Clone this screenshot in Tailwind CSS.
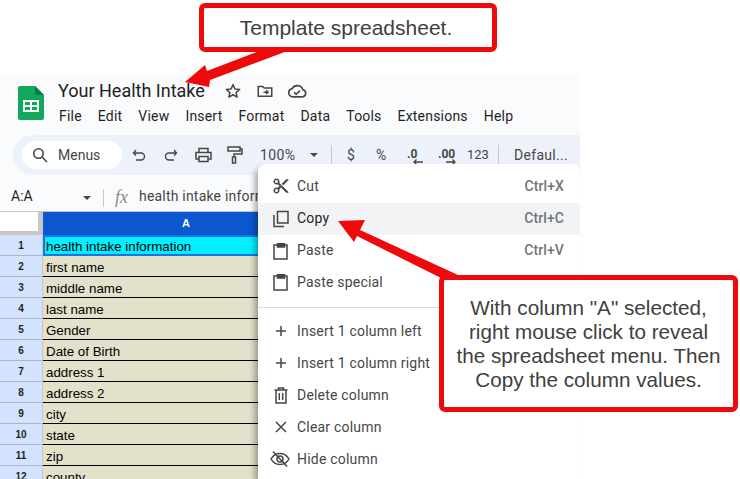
<!doctype html>
<html><head><meta charset="utf-8"><script src="https://cdn.jsdelivr.net/npm/@tailwindcss/browser@4"></script></head>
<body class="bg-white">
<div class="relative w-[740px] h-[479px] overflow-hidden bg-white font-['Roboto',sans-serif]">
  <!-- App -->
  <div class="absolute left-0 top-[74px] w-[580px] h-[405px] flex flex-col bg-[#f9fbfd] overflow-hidden">
    <div class="flex h-[61px] shrink-0">
      <div class="w-[58px] shrink-0 pl-[18px] pt-[12px]">
        <svg width="26" height="34" viewBox="0 0 26 34"><path d="M2 0H17L26 9V32a2 2 0 0 1-2 2H2a2 2 0 0 1-2-2V2a2 2 0 0 1 2-2z" fill="#11a75c"/><path d="M17 0L26 9H19a2 2 0 0 1-2-2z" fill="#0b7a42"/><path d="M5 14H21V26H5zM7 16V19H12V16zM14 16V19H19V16zM7 21V24H12V21zM14 21V24H19V21z" fill="#fff" fill-rule="evenodd"/></svg>
      </div>
      <div class="flex flex-col">
        <div class="flex items-center h-[34px]">
          <span class="text-[18px] leading-[34px] text-[#1f1f1f]">Your Health Intake</span>
          <svg class="ml-[19px]" width="18" height="18" viewBox="0 0 24 24" fill="none" stroke="#444746" stroke-width="2" stroke-linejoin="round"><path d="M12 3.500l2.600 5.800 6.300.6-4.800 4.200 1.400 6.200L12 17l-5.500 3.300 1.400-6.200L3.100 9.900l6.300-.6z"/></svg>
          <svg class="ml-[14px]" width="18" height="18" viewBox="0 0 24 24" fill="none" stroke="#444746" stroke-width="2"><path d="M3 6h6l2 2h10v11H3z"/><path d="M10 13.500h6M13.500 11l2.500 2.500-2.500 2.500"/></svg>
          <svg class="ml-[13px]" width="20" height="18" viewBox="0 0 24 20" fill="none" stroke="#444746" stroke-width="2"><path d="M7 17a5 5 0 0 1-.8-9.900A7 7 0 0 1 19 8.500 4.300 4.300 0 0 1 18.500 17z"/><path d="M8.500 11.500l2.500 2.500 4.500-4.500"/></svg>
        </div>
        <div class="flex h-[24px] items-center gap-[16px] text-[14px] text-[#1f1f1f] mt-[-4px] tracking-[.2px]">
          <span class="ml-px">File</span><span>Edit</span><span>View</span><span>Insert</span><span>Format</span><span>Data</span><span>Tools</span><span>Extensions</span><span>Help</span>
        </div>
      </div>
    </div>
    <!-- Toolbar -->
    <div class="ml-[13px] h-[40px] shrink-0 flex items-center rounded-l-[20px] bg-[#edf2fa] text-[14px] text-[#444746]">
      <div class="ml-[9px] w-[100px] h-[28px] rounded-full bg-white flex items-center pl-[10px] gap-[10px]">
        <svg width="16" height="16" viewBox="0 0 16 16" fill="none" stroke="#444746" stroke-width="1.600"><circle cx="6.500" cy="6.500" r="4.700"/><path d="M10 10l5 5"/></svg>
        <span>Menus</span>
      </div>
      <svg class="ml-[10px]" width="14" height="14" viewBox="0 0 14 14" fill="none" stroke="#444746" stroke-width="1.400"><path d="M4 2L1.500 5 4 7.500M1.500 5H9a3 3 0 0 1 0 7H4"/></svg>
      <svg class="ml-[18px]" width="14" height="14" viewBox="0 0 14 14" fill="none" stroke="#444746" stroke-width="1.400"><path d="M10 2l2.500 3L10 7.500M12.500 5H5a3 3 0 0 0 0 7h5"/></svg>
      <svg class="ml-[17px]" width="17" height="16" viewBox="0 0 17 16" fill="none" stroke="#444746" stroke-width="1.500"><path d="M4 5V1.500h9V5M4 12H1V5.500h15V12h-3M4 9.500h9v5H4z"/></svg>
      <svg class="ml-[15px]" width="16" height="18" viewBox="0 0 16 18" fill="none" stroke="#444746" stroke-width="1.500"><path d="M1 1h12v4H1zM13 3h2v5H7v3M5.500 11h3v6h-3z"/></svg>
      <span class="ml-[17px] w-[38px] tracking-[.4px]">100%</span>
      <span class="ml-[12px] w-0 h-0 border-x-[4px] border-t-[4px] border-x-transparent border-t-[#444746]"></span>
      <span class="ml-[13px] w-px h-[20px] bg-[#c7c7c7]"></span>
      <span class="ml-[15px] w-[9px]">$</span>
      <span class="ml-[20px] w-[12px]">%</span>
      <span class="ml-[19px] relative w-[16px] h-[20px] text-[12px] font-bold leading-[18px]">.0<svg class="absolute left-[6px] top-[14px]" width="10" height="6" viewBox="0 0 10 6" fill="none" stroke="#444746" stroke-width="1.300"><path d="M10 3H1M3.500.5L1 3l2.500 2.500"/></svg></span>
      <span class="ml-[15px] relative w-[20px] h-[20px] text-[12px] font-bold leading-[18px]">.00<svg class="absolute left-[8px] top-[14px]" width="10" height="6" viewBox="0 0 10 6" fill="none" stroke="#444746" stroke-width="1.300"><path d="M0 3h9M6.500.5L9 3 6.500 5.500"/></svg></span>
      <span class="ml-[9px] w-[22px] text-[13px]">123</span>
      <span class="ml-[9px] w-px h-[20px] bg-[#c7c7c7]"></span>
      <span class="ml-[15px] tracking-[.3px]">Defaul...</span>
    </div>
    <!-- Formula bar -->
    <div class="h-[37px] shrink-0 flex items-center text-[14px] text-[#1f1f1f] bg-[#f9fbfd] border-b border-[#c7c7c7]">
      <span class="ml-[11px] w-[70px] text-[14px] mt-[9px] h-[27px] leading-[24px]">A:A</span>
      <span class="ml-[2px] mt-[9px] w-0 h-0 border-x-[4px] border-t-[4px] border-x-transparent border-t-[#444746]"></span>
      <span class="ml-[12px] mt-[9px] w-px h-[18px] bg-[#c7c7c7]"></span>
      <span class="ml-[11px] mt-[9px] font-['Liberation_Serif',serif] italic text-[18px] text-[#8a8a8a] w-[24px]">fx</span>
      <span class="mt-[7px] whitespace-nowrap text-[#444746] tracking-[.2px]">health intake information</span>
    </div>
    <!-- Grid -->
    <div class="flex-1 min-h-0 flex flex-col font-['Liberation_Sans',sans-serif]">
      <div class="flex h-[23px] shrink-0">
        <div class="w-[43px] bg-[#c7c7c7] pr-[5px] pb-[4px]"><div class="h-full bg-white"></div></div>
        <div class="flex-1 bg-[#0b57d0]"><div class="w-[286px] text-white text-[11px] font-bold text-center leading-[23px]">A</div></div>
      </div>
      <div class="flex h-[21px] shrink-0"><div class="w-[43px] shrink-0 bg-[#d3e3fd] border-r border-[#c7c7c7] text-[10px] font-bold text-center leading-[21px] text-[#1f1f1f] border-b border-b-[#a8b8d0]">1</div><div class="flex-1 bg-[#00f0ff] border-2 border-[#1a73e8] text-[13.33px] leading-[19px] text-black pl-[1px] whitespace-nowrap">health intake information</div></div>
      <div class="flex h-[21px] shrink-0"><div class="w-[43px] shrink-0 bg-[#d3e3fd] border-r border-[#c7c7c7] text-[10px] font-bold text-center leading-[21px] text-[#1f1f1f] border-b border-b-[#a8b8d0]">2</div><div class="flex-1 bg-[#e4e1cb] border-b border-black text-[13.33px] leading-[24px] text-black pl-[3px]">first name</div></div>
      <div class="flex h-[21px] shrink-0"><div class="w-[43px] shrink-0 bg-[#d3e3fd] border-r border-[#c7c7c7] text-[10px] font-bold text-center leading-[21px] text-[#1f1f1f] border-b border-b-[#a8b8d0]">3</div><div class="flex-1 bg-[#e4e1cb] border-b border-black text-[13.33px] leading-[24px] text-black pl-[3px]">middle name</div></div>
      <div class="flex h-[21px] shrink-0"><div class="w-[43px] shrink-0 bg-[#d3e3fd] border-r border-[#c7c7c7] text-[10px] font-bold text-center leading-[21px] text-[#1f1f1f] border-b border-b-[#a8b8d0]">4</div><div class="flex-1 bg-[#e4e1cb] border-b border-black text-[13.33px] leading-[24px] text-black pl-[3px]">last name</div></div>
      <div class="flex h-[21px] shrink-0"><div class="w-[43px] shrink-0 bg-[#d3e3fd] border-r border-[#c7c7c7] text-[10px] font-bold text-center leading-[21px] text-[#1f1f1f] border-b border-b-[#a8b8d0]">5</div><div class="flex-1 bg-[#e4e1cb] border-b border-black text-[13.33px] leading-[24px] text-black pl-[3px]">Gender</div></div>
      <div class="flex h-[21px] shrink-0"><div class="w-[43px] shrink-0 bg-[#d3e3fd] border-r border-[#c7c7c7] text-[10px] font-bold text-center leading-[21px] text-[#1f1f1f] border-b border-b-[#a8b8d0]">6</div><div class="flex-1 bg-[#e4e1cb] border-b border-black text-[13.33px] leading-[24px] text-black pl-[3px]">Date of Birth</div></div>
      <div class="flex h-[21px] shrink-0"><div class="w-[43px] shrink-0 bg-[#d3e3fd] border-r border-[#c7c7c7] text-[10px] font-bold text-center leading-[21px] text-[#1f1f1f] border-b border-b-[#a8b8d0]">7</div><div class="flex-1 bg-[#e4e1cb] border-b border-black text-[13.33px] leading-[24px] text-black pl-[3px]">address 1</div></div>
      <div class="flex h-[21px] shrink-0"><div class="w-[43px] shrink-0 bg-[#d3e3fd] border-r border-[#c7c7c7] text-[10px] font-bold text-center leading-[21px] text-[#1f1f1f] border-b border-b-[#a8b8d0]">8</div><div class="flex-1 bg-[#e4e1cb] border-b border-black text-[13.33px] leading-[24px] text-black pl-[3px]">address 2</div></div>
      <div class="flex h-[21px] shrink-0"><div class="w-[43px] shrink-0 bg-[#d3e3fd] border-r border-[#c7c7c7] text-[10px] font-bold text-center leading-[21px] text-[#1f1f1f] border-b border-b-[#a8b8d0]">9</div><div class="flex-1 bg-[#e4e1cb] border-b border-black text-[13.33px] leading-[24px] text-black pl-[3px]">city</div></div>
      <div class="flex h-[21px] shrink-0"><div class="w-[43px] shrink-0 bg-[#d3e3fd] border-r border-[#c7c7c7] text-[10px] font-bold text-center leading-[21px] text-[#1f1f1f] border-b border-b-[#a8b8d0]">10</div><div class="flex-1 bg-[#e4e1cb] border-b border-black text-[13.33px] leading-[24px] text-black pl-[3px]">state</div></div>
      <div class="flex h-[21px] shrink-0"><div class="w-[43px] shrink-0 bg-[#d3e3fd] border-r border-[#c7c7c7] text-[10px] font-bold text-center leading-[21px] text-[#1f1f1f] border-b border-b-[#a8b8d0]">11</div><div class="flex-1 bg-[#e4e1cb] border-b border-black text-[13.33px] leading-[24px] text-black pl-[3px]">zip</div></div>
      <div class="flex h-[21px] shrink-0"><div class="w-[43px] shrink-0 bg-[#d3e3fd] border-r border-[#c7c7c7] text-[10px] font-bold text-center leading-[21px] text-[#1f1f1f]">12</div><div class="flex-1 bg-[#e4e1cb] text-[13.33px] leading-[24px] text-black pl-[3px]">county</div></div>
    </div>
  </div>

  <!-- Context menu -->
  <div class="absolute left-[258px] top-[164px] w-[322px] h-[315px] bg-white rounded-t-[8px] shadow-[-4px_4px_6px_-1px_rgba(0,0,0,0.35)] pt-[6px] text-[14px] text-[#444746] tracking-[.2px]">
    <div class="h-[33px] pb-px flex items-center"><span class="w-[39px] pl-[14px]"><svg width="18" height="18" viewBox="0 0 24 24" fill="#444746"><path d="M9.640 7.640c.230-.500.360-1.050.360-1.640 0-2.210-1.790-4-4-4S2 3.790 2 6s1.790 4 4 4c.590 0 1.140-.130 1.640-.360L10 12l-2.360 2.360C7.140 14.130 6.590 14 6 14c-2.210 0-4 1.790-4 4s1.790 4 4 4 4-1.790 4-4c0-.590-.130-1.140-.360-1.640L12 14l7 7h3v-1L9.640 7.640zM6 8c-1.100 0-2-.890-2-2s.900-2 2-2 2 .890 2 2-.900 2-2 2zm0 12c-1.100 0-2-.890-2-2s.900-2 2-2 2 .890 2 2-.900 2-2 2zm6-7.500c-.280 0-.500-.220-.500-.500s.220-.500.500-.500.500.220.500.500-.220.500-.500.500zM19 3l-6 6 2 2 7-7V3h-3z"/></svg></span><span class="flex-1">Cut</span><span class="pr-[16px] font-medium text-[#70757a] text-[14px] tracking-[.1px]">Ctrl+X</span></div>
    <div class="h-[32px] pb-px flex items-center bg-[#f1f3f4]"><span class="w-[39px] pl-[14px]"><svg width="18" height="18" viewBox="0 0 18 18" fill="none" stroke="#444746" stroke-width="1.500"><path d="M5.500 1.500h10.500v11.500H5.500z"/><path d="M2 5v11.500h10"/></svg></span><span class="flex-1 text-[#1f1f1f]">Copy</span><span class="pr-[16px] font-medium text-[#70757a] text-[14px] tracking-[.1px]">Ctrl+C</span></div>
    <div class="h-[31px] flex items-center"><span class="w-[39px] pl-[14px]"><svg width="18" height="18" viewBox="0 0 18 18" fill="none" stroke="#444746" stroke-width="1.500"><path d="M5 3H2v14h13V3h-3"/><path d="M5.500 1.800h7V5h-7z" fill="#444746"/></svg></span><span class="flex-1">Paste</span><span class="pr-[16px] font-medium text-[#70757a] text-[14px] tracking-[.1px]">Ctrl+V</span></div>
    <div class="h-[32px] flex items-center"><span class="w-[39px] pl-[14px]"><svg width="18" height="18" viewBox="0 0 18 18" fill="none" stroke="#444746" stroke-width="1.500"><path d="M5 3H2v14h13V3h-3"/><path d="M5.500 1.800h7V5h-7z" fill="#444746"/></svg></span><span>Paste special</span></div>
    <div class="h-px bg-[#dadce0] mt-[9px] mb-[7px]"></div>
    <div class="h-[32px] flex items-center"><span class="w-[39px] pl-[14px]"><svg width="18" height="18" viewBox="0 0 18 18" stroke="#444746" stroke-width="1.500"><path d="M9 4v10M4 9h10"/></svg></span><span>Insert 1 column left</span></div>
    <div class="h-[32px] flex items-center"><span class="w-[39px] pl-[14px]"><svg width="18" height="18" viewBox="0 0 18 18" stroke="#444746" stroke-width="1.500"><path d="M9 4v10M4 9h10"/></svg></span><span>Insert 1 column right</span></div>
    <div class="h-[32px] flex items-center"><span class="w-[39px] pl-[14px]"><svg width="18" height="18" viewBox="0 0 18 18" fill="none" stroke="#444746" stroke-width="1.500"><path d="M2.500 4h13M6.500 4V2h5v2M4 4v13h10V4M7.300 7v7M10.700 7v7"/></svg></span><span>Delete column</span></div>
    <div class="h-[32px] flex items-center"><span class="w-[39px] pl-[14px]"><svg width="18" height="18" viewBox="0 0 18 18" stroke="#444746" stroke-width="1.500"><path d="M4 4l10 10M14 4L4 14"/></svg></span><span>Clear column</span></div>
    <div class="h-[32px] flex items-center"><span class="w-[39px] pl-[12px]"><svg width="20" height="18" viewBox="0 0 20 18" fill="none" stroke="#444746" stroke-width="1.500"><path d="M1 9c2-3.500 5-5.500 9-5.500s7 2 9 5.500c-2 3.500-5 5.500-9 5.500S3 12.500 1 9z"/><circle cx="10" cy="9" r="3"/><path d="M3 1.500L17 16.500"/></svg></span><span>Hide column</span></div>
  </div>

  <!-- Arrows -->
  <svg class="absolute left-0 top-0" width="740" height="479" viewBox="0 0 740 479">
    <polygon fill="#ee0a0a" points="262,50 290,50 210,80 209,87 185,82 205,65 207,71"/>
    <polygon fill="#ee0a0a" points="338,221 365,220 360,230 458,275 445,280 357,236 354,242"/>
  </svg>

  <!-- Callouts -->
  <div class="absolute left-[199px] top-[3px] w-[298px] h-[49px] bg-white border-[5px] border-[#ee0a0a] rounded-[6px] flex items-center justify-center pr-[4px] font-['Liberation_Sans',sans-serif] text-[21px] text-[#404040]">Template spreadsheet.</div>
  <div class="absolute left-[439px] top-[275px] w-[299px] h-[137px] bg-white border-[5px] border-[#ee0a0a] rounded-[6px] flex items-center justify-center text-center font-['Liberation_Sans',sans-serif] text-[20.700px] leading-[24px] text-[#404040]">With column "A" selected,<br>right mouse click to reveal<br>the spreadsheet menu. Then<br>Copy the column values.</div>
</div>
</body></html>
